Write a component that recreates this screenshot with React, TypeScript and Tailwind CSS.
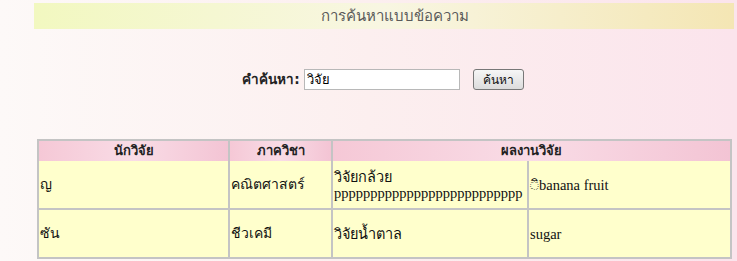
import React, { useState } from 'react';

const rows = [
    { name: 'ญ', dept: 'คณิตศาสตร์', work: ['วิจัยกล้วย', 'pppppppppppppppppppppppppp'], detail: '◌ิbanana fruit' },
    { name: 'ซัน', dept: 'ชีวเคมี', work: ['วิจัยน้ำตาล'], detail: 'sugar' },
];

const App: React.FC = () => {
    const [query, setQuery] = useState('วิจัย');

    return (
        <div
            className="w-[737px] h-[261px] overflow-hidden bg-gradient-to-r from-[#fdf9f8] via-[#fcefef] to-[#fbe4ec] text-black"
            style={{ fontFamily: 'Tahoma, "DejaVu Sans", "Liberation Sans", sans-serif' }}
        >
            <div className="pt-[3px] pl-[34px] pr-[3px]">
                {/* Title bar */}
                <div className="h-[26px] flex items-center justify-center pl-[22px] bg-gradient-to-r from-[#f2f8c0] via-[#f8f6e2] to-[#f4e6b4] text-[15px] text-[#5a5a5a]">
                    การค้นหาแบบข้อความ
                </div>
            </div>

            {/* Search */}
            <div className="mt-[40px] flex items-center justify-center gap-[13px] pl-[29px]">
                <div className="flex items-center gap-[4px]">
                    <span className="text-[13.5px] font-bold text-[#222]">คำค้นหา:</span>
                    <input
                        value={query}
                        onChange={(e) => setQuery(e.target.value)}
                        className="w-[156px] h-[21px] px-[2px] bg-white border border-[#b8b8b8] text-[13px] outline-none"
                    />
                </div>
                <button className="h-[21px] px-[9px] rounded-[3px] border border-[#777] bg-gradient-to-b from-[#f6f6f6] to-[#dcdcdc] text-[12px] text-[#111]">
                    ค้นหา
                </button>
            </div>

            {/* Results */}
            <div className="mt-[49px] ml-[37px] w-[695px] border-2 border-[#c4c4c4]">
                <div className="grid grid-cols-[191px_103px_196px_1fr] h-[18px] text-[13px] font-bold text-[#222]">
                    <div className="flex items-center justify-center bg-gradient-to-r from-[#f5c8d6] via-[#f9dce6] to-[#f3c4d4] border-r-2 border-[#c4c4c4]">นักวิจัย</div>
                    <div className="flex items-center justify-center bg-gradient-to-r from-[#f5c8d6] via-[#f9dce6] to-[#f3c4d4] border-r-2 border-[#c4c4c4]">ภาควิชา</div>
                    <div className="col-span-2 flex items-center justify-center bg-gradient-to-r from-[#f5c8d6] via-[#f9dce6] to-[#f3c4d4]">ผลงานวิจัย</div>
                </div>
                {rows.map((r) => (
                    <div
                        key={r.name}
                        className="grid grid-cols-[191px_103px_196px_1fr] h-[49px] border-t-2 border-[#c4c4c4] bg-[#ffffcc] text-[14.5px] text-[#111] leading-[16px]"
                        style={{ fontFamily: '"Liberation Serif", Tahoma, serif' }}
                    >
                        <div className="flex items-center pl-[1px] text-[14px] border-r-2 border-[#c4c4c4]">{r.name}</div>
                        <div className="flex items-center pl-[1px] text-[14px] border-r-2 border-[#c4c4c4]">{r.dept}</div>
                        <div className="flex flex-col justify-center pl-[1px] border-r-2 border-[#c4c4c4] overflow-hidden">
                            {r.work.map((line) => (
                                <span key={line} className="whitespace-nowrap">{line}</span>
                            ))}
                        </div>
                        <div className="flex items-center pl-[1px]">{r.detail}</div>
                    </div>
                ))}
            </div>
        </div>
    );
};

export default App;
